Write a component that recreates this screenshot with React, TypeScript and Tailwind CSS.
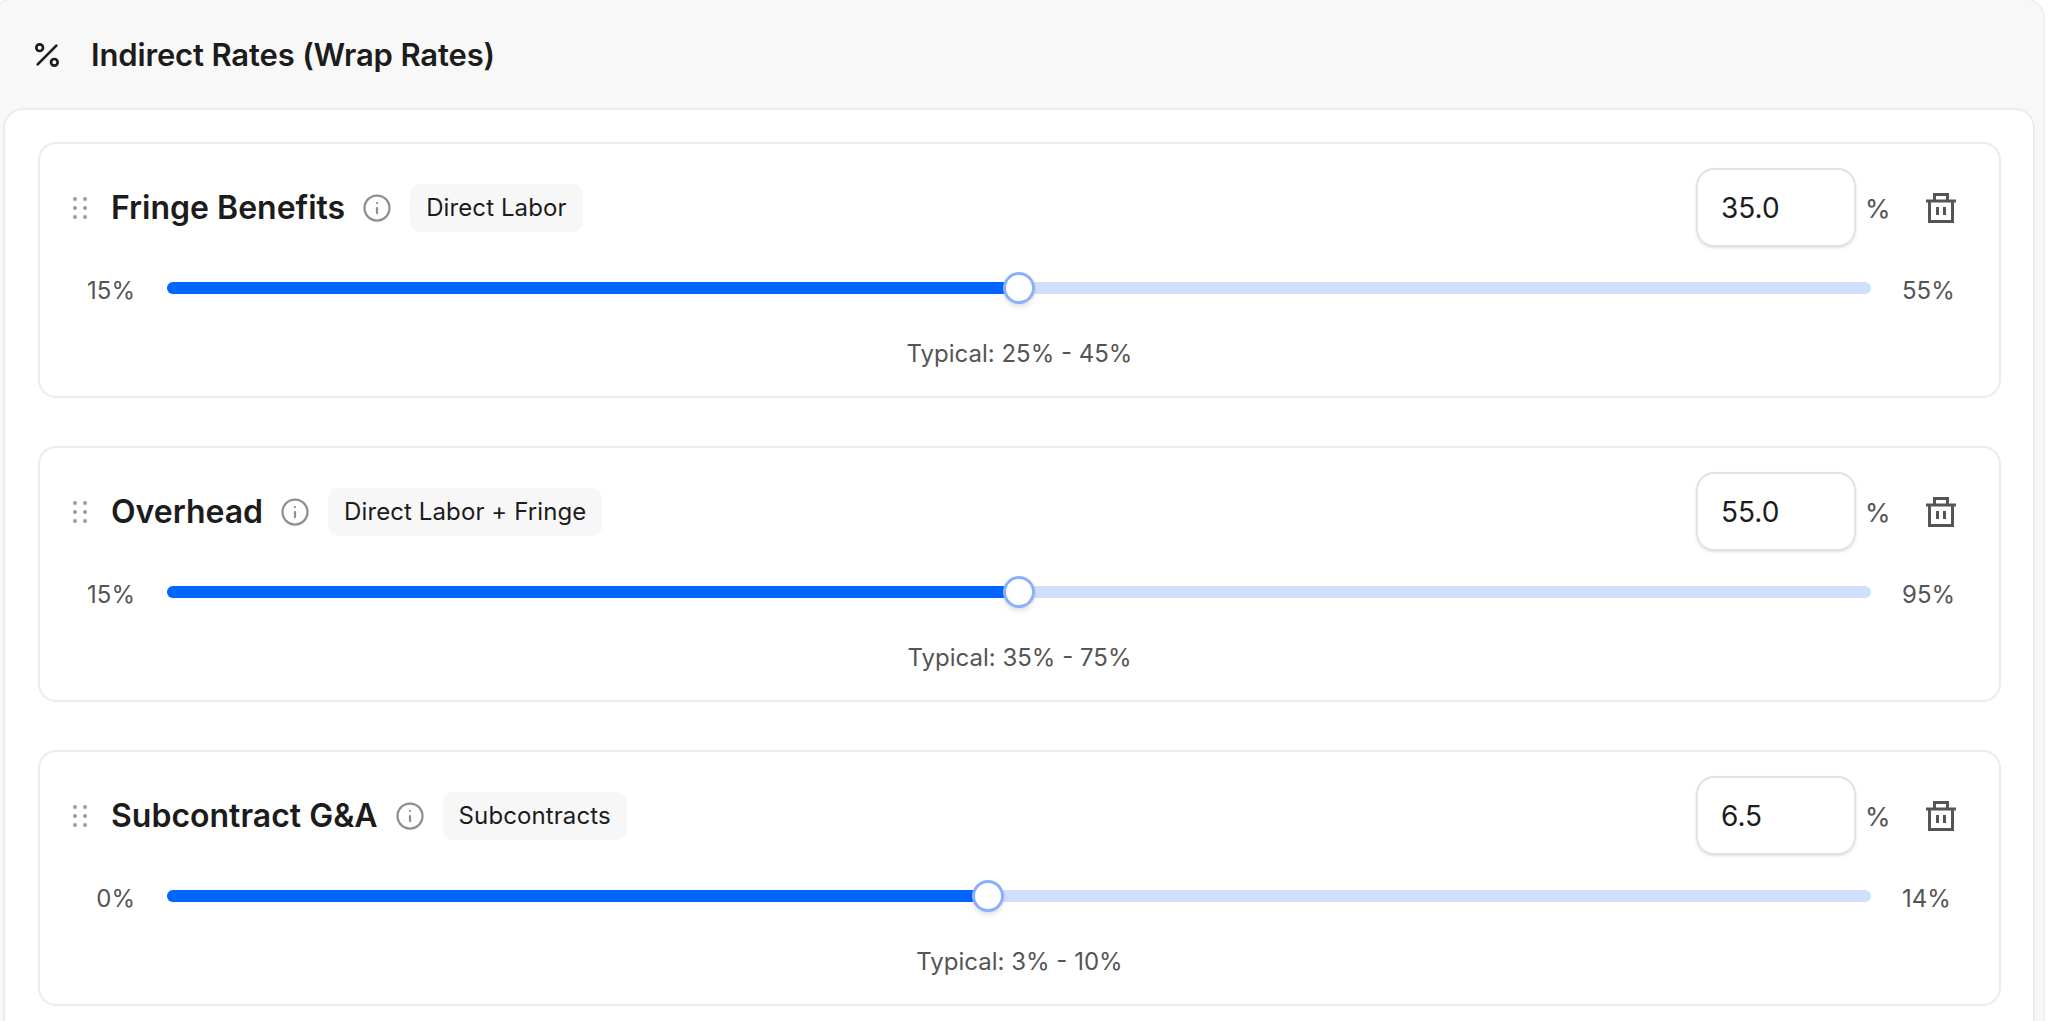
import { Info, Percent } from "lucide-react";

const rates = [
  { name: "Fringe Benefits", base: "Direct Labor", value: "35.0", min: "15%", max: "55%", typical: "Typical: 25% - 45%", pos: 852 },
  { name: "Overhead", base: "Direct Labor + Fringe", value: "55.0", min: "15%", max: "95%", typical: "Typical: 35% - 75%", pos: 852 },
  { name: "Subcontract G&A", base: "Subcontracts", value: "6.5", min: "0%", max: "14%", typical: "Typical: 3% - 10%", pos: 821 },
];

const DragDots = () => (
  <svg width="14" height="22" viewBox="0 0 14 22" className="shrink-0 text-[#9c9c9c]" fill="currentColor">
    <circle cx="2" cy="2" r="2" />
    <circle cx="12" cy="2" r="2" />
    <circle cx="2" cy="11" r="2" />
    <circle cx="12" cy="11" r="2" />
    <circle cx="2" cy="20" r="2" />
    <circle cx="12" cy="20" r="2" />
  </svg>
);

const TrashIcon = () => (
  <svg width="30" height="30" viewBox="0 0 30 30" fill="none" stroke="#555555" strokeWidth="3" className="shrink-0">
    <path d="M0 8h30" />
    <path d="M8.5 8V1.5h13V8" />
    <path d="M3.5 8v20.5h23V8" />
    <path d="M11.5 14v8M18.5 14v8" />
  </svg>
);

const RateCard = ({ rate }: { rate: (typeof rates)[number] }) => (
  <div className="h-[256px] rounded-[18px] border-2 border-[#ececec] bg-white pl-[33px] pr-[43px] pt-[24px]">
    {/* Header row */}
    <div className="flex h-[79px] items-center">
      <DragDots />
      <span className="ml-[24px] text-[32px] font-semibold text-[#1c1c1c]">{rate.name}</span>
      <Info className="ml-[17px] w-[30px] h-[30px] text-[#8f8f8f]" strokeWidth={1.8} />
      <span className="ml-[18px] flex h-[48px] items-center rounded-[10px] bg-[#f7f7f7] px-[16px] text-[24px] tracking-[0.1px] text-[#1c1c1c]">
        {rate.base}
      </span>
      <div className="ml-auto flex h-[79px] w-[160px] items-center rounded-[18px] border-2 border-[#e3e3e3] pl-[23px] text-[28px] text-[#1c1c1c] shadow-sm">
        {rate.value}
      </div>
      <span className="ml-[9px] mt-[2px] w-[61px] text-[26px] text-[#555555]">%</span>
      <TrashIcon />
    </div>

    {/* Slider row */}
    <div className="mt-[27px] flex h-[28px] items-center">
      <span className="mt-[6px] w-[62px] text-right text-[24px] leading-[24px] text-[#555555]">{rate.min}</span>
      <div className="relative ml-[32px] h-[12px] w-[1704px] shrink-0 rounded-full bg-[#cfe0fd]">
        <div className="h-full rounded-full bg-[#0066ff]" style={{ width: rate.pos }} />
        <div
          className="absolute top-[-10px] h-[32px] w-[32px] -translate-x-1/2 rounded-full border-[3px] border-[#8ab0fb] bg-white shadow-md"
          style={{ left: rate.pos }}
        />
      </div>
      <span className="ml-[31px] mt-[6px] text-[24px] leading-[24px] text-[#555555]">{rate.max}</span>
    </div>

    <div className="mr-[-10px] mt-[40px] text-center text-[24px] leading-[24px] text-[#555555]">{rate.typical}</div>
  </div>
);

export default function App() {
  return (
    <div className="h-screen overflow-hidden bg-white font-['Inter',sans-serif]">
      <div className="ml-[-7px] mt-[-2px] w-[2052px] rounded-t-[20px] border-2 border-[#f0f0f0] bg-[#f8f8f8] pl-[8px] pr-[8px]">
        <div className="flex h-[108px] items-center pl-[28px] pt-[2px]">
          <Percent className="w-[32px] h-[32px] text-[#1c1c1c]" />
          <span className="ml-[28px] mt-[1px] text-[31px] font-semibold tracking-[-0.15px] text-[#1c1c1c]">
            Indirect Rates (Wrap Rates)
          </span>
        </div>
        <div className="flex h-[920px] flex-col gap-[48px] rounded-t-[20px] border-2 border-[#ececec] bg-white pl-[33px] pr-[32px] pt-[32px]">
          {rates.map((rate) => (
            <RateCard key={rate.name} rate={rate} />
          ))}
        </div>
      </div>
    </div>
  );
}
